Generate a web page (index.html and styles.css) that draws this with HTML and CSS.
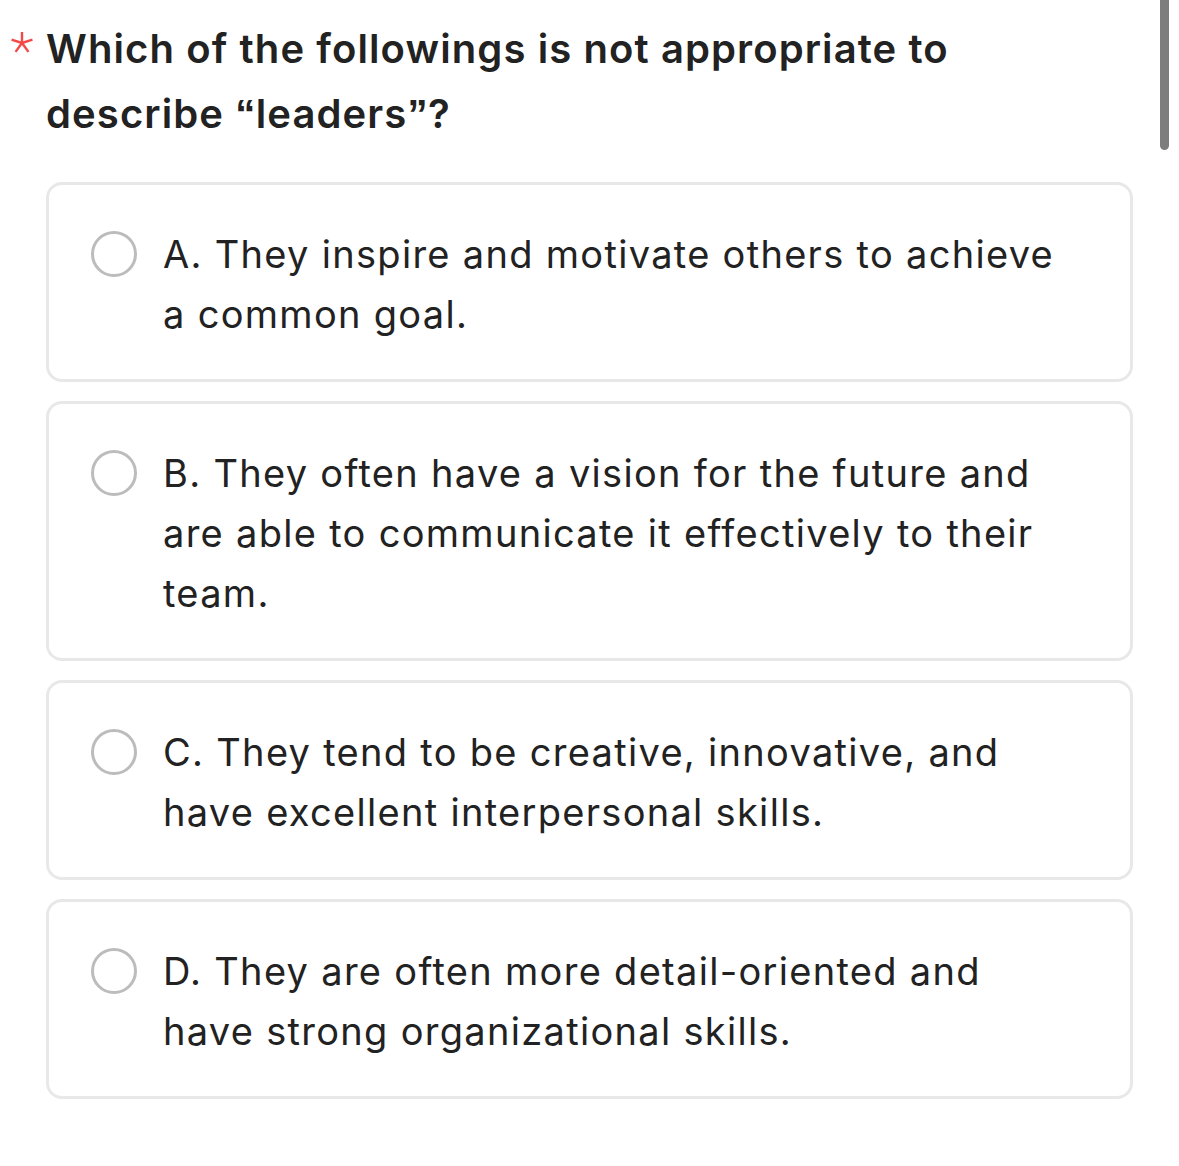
FILE: index.html
```html
<!DOCTYPE html>
<html>
<head>
<meta charset="utf-8">
<link rel="stylesheet" href="styles.css">
</head>
<body>
<div class="page">
  <div class="question">
    <svg class="required" width="24" height="24" viewBox="0 0 24 24" aria-hidden="true">
      <g stroke="#f44848" stroke-width="2.4" fill="none">
        <line x1="12" y1="12" x2="12" y2="1"/>
        <line x1="12" y1="12" x2="22.46" y2="8.6"/>
        <line x1="12" y1="12" x2="18.47" y2="20.9"/>
        <line x1="12" y1="12" x2="5.53" y2="20.9"/>
        <line x1="12" y1="12" x2="1.54" y2="8.6"/>
      </g>
    </svg>
    <h1 class="title">Which of the followings is not appropriate to describe <span class="quote">“</span>leaders<span class="quote">”</span>?</h1>
  </div>
  <div class="options">
    <label class="option"><span class="radio"></span><span class="text">A. They inspire and motivate others to achieve a common goal.</span></label>
    <label class="option"><span class="radio"></span><span class="text">B. They often have a vision for the future and are able to communicate it effectively to their team.</span></label>
    <label class="option"><span class="radio"></span><span class="text">C. They tend to be creative, innovative, and have excellent interpersonal skills.</span></label>
    <label class="option"><span class="radio"></span><span class="text">D. They are often more detail-oriented and have strong organizational skills.</span></label>
  </div>
</div>
<div class="scrollbar"></div>
</body>
</html>
```
FILE: styles.css
```css
html, body {
  margin: 0;
  padding: 0;
  background: #ffffff;
}
body {
  font-family: Inter, "Liberation Sans", Arial, sans-serif;
  color: #222222;
  width: 1179px;
  height: 1166px;
  overflow: hidden;
  position: relative;
}
.page {
  padding: 0 46px 0 46px;
}
.question {
  position: relative;
  padding-top: 16px;
}
.required {
  position: absolute;
  left: -36px;
  top: 31px;
  display: block;
}
.title {
  margin: 0;
  font-size: 40px;
  font-weight: 600;
  line-height: 65px;
  letter-spacing: 1.1px;
  width: 960px;
}
.quote {
  font-family: "Liberation Sans", Arial, sans-serif;
  font-weight: bold;
  letter-spacing: 0.5px;
}
.options {
  margin-top: 35px;
  display: flex;
  flex-direction: column;
  gap: 19px;
  width: 1087px;
}
.option {
  display: flex;
  align-items: flex-start;
  border: 3px solid #e8e8e8;
  border-radius: 16px;
  padding: 39px 68px 35px 42px;
  box-sizing: border-box;
}
.radio {
  flex: none;
  width: 46px;
  height: 46px;
  box-sizing: border-box;
  border: 3px solid #bcbcbc;
  border-radius: 50%;
  margin-top: 7px;
  margin-right: 26px;
}
.text {
  font-size: 38px;
  line-height: 60px;
  letter-spacing: 1.3px;
  color: #222222;
}
.scrollbar {
  position: absolute;
  right: 10px;
  top: 0;
  width: 9px;
  height: 150px;
  background: #7d7d7d;
  border-radius: 0 0 5px 5px;
}
```
